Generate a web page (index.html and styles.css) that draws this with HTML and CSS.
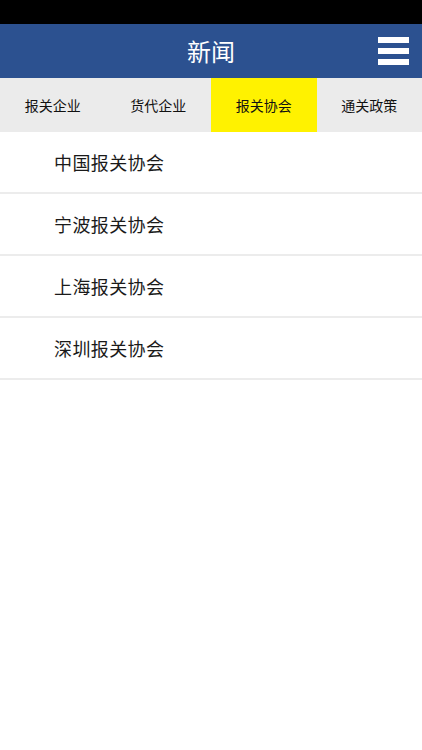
FILE: index.html
```html
<!DOCTYPE html>
<html lang="zh-CN">
<head>
<meta charset="utf-8">
<title>新闻</title>
<link rel="stylesheet" href="styles.css">
</head>
<body>
<div class="status"></div>
<header class="header">
  <h1 class="title">新闻</h1>
  <button class="menu" aria-label="菜单">
    <span class="bar"></span><span class="bar"></span><span class="bar"></span>
  </button>
</header>
<nav class="tabs">
  <div class="tab">报关企业</div>
  <div class="tab">货代企业</div>
  <div class="tab active">报关协会</div>
  <div class="tab">通关政策</div>
</nav>
<ul class="list">
  <li class="item">中国报关协会</li>
  <li class="item">宁波报关协会</li>
  <li class="item">上海报关协会</li>
  <li class="item">深圳报关协会</li>
</ul>
</body>
</html>
```
FILE: styles.css
```css
* { box-sizing: border-box; }
html, body { margin: 0; padding: 0; background: #fff; }
body {
  font-family: "Noto Sans CJK SC", "Noto Sans", sans-serif;
  width: 422px;
  height: 750px;
  overflow: hidden;
}
.status { height: 24px; background: #000; }
.header {
  height: 54px;
  background: #2c5190;
  display: flex;
  align-items: center;
  justify-content: center;
  position: relative;
}
.title {
  margin: 0;
  font-size: 24px;
  font-weight: 400;
  color: #fff;
  line-height: 1;
}
.menu {
  position: absolute;
  right: 13px;
  top: 12px;
  width: 31px;
  height: 30px;
  border: 0;
  background: transparent;
  display: flex;
  flex-direction: column;
  justify-content: space-between;
  padding: 1px 0;
}
.bar { display: block; height: 6px; background: #fff; }
.tabs {
  display: grid;
  grid-template-columns: repeat(4, 1fr);
  height: 54px;
  background: #ebebeb;
}
.tab {
  display: flex;
  align-items: center;
  justify-content: center;
  font-size: 14px;
  color: #111;
}
.tab.active { background: #fff200; }
.list { list-style: none; margin: 0; padding: 0; }
.item {
  height: 62px;
  border-bottom: 2px solid #ececec;
  display: flex;
  align-items: center;
  padding-left: 54px;
  padding-bottom: 1px;
  font-size: 18px;
  letter-spacing: 0.4px;
  color: #1a1a1a;
}
```
